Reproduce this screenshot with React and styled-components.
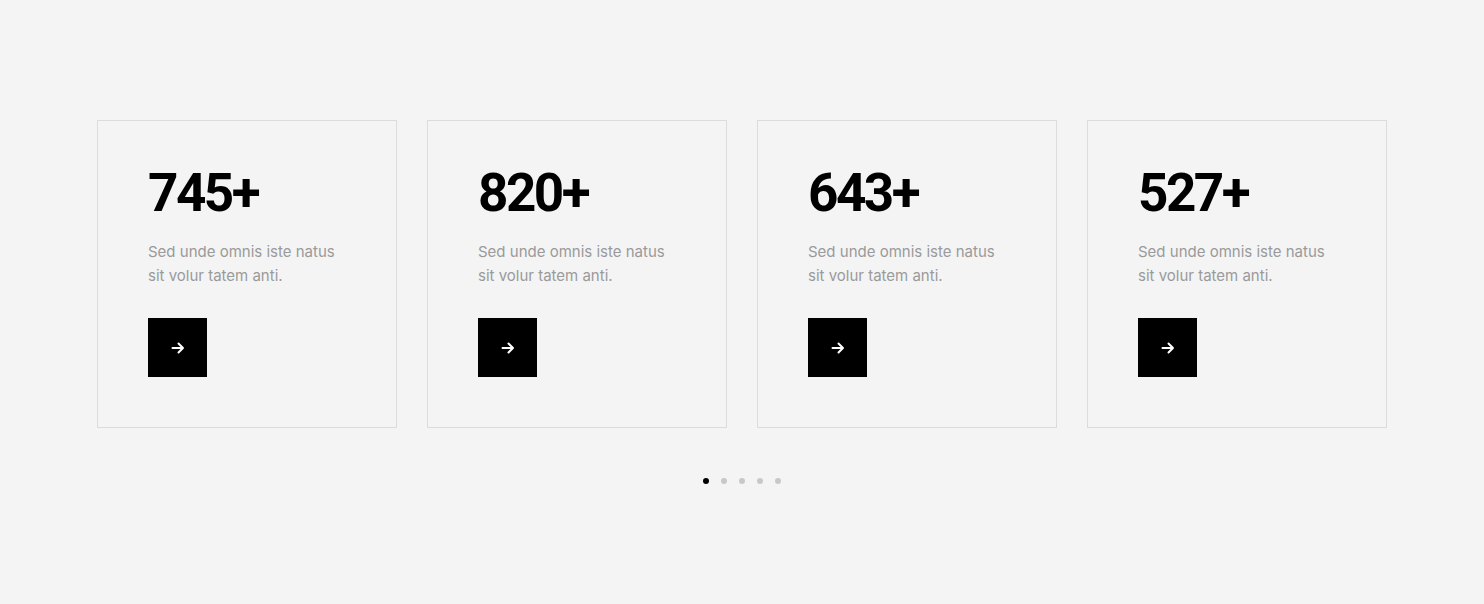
import React from "react";
import styled, { createGlobalStyle } from "styled-components";

const GlobalStyle = createGlobalStyle`
  html, body {
    margin: 0;
    background: #f4f4f4;
    font-family: Inter, "Liberation Sans", sans-serif;
  }
`;

const Section = styled.section`
  padding: 120px 0 0;
  height: 604px;
  box-sizing: border-box;
  display: flex;
  flex-direction: column;
  align-items: center;
`;

const CardRow = styled.div`
  display: grid;
  grid-template-columns: repeat(4, 300px);
  gap: 30px;
`;

const Card = styled.div`
  box-sizing: border-box;
  border: 1px solid #dcdcdc;
  padding: 43px 50px 50px;
  display: flex;
  flex-direction: column;
`;

const Number = styled.div`
  font-family: Roboto, "Liberation Sans", sans-serif;
  font-weight: 700;
  font-size: 53px;
  line-height: 58px;
  letter-spacing: -2.5px;
  color: #000;
`;

const Text = styled.p`
  margin: 18px 0 0;
  font-size: 15px;
  line-height: 24px;
  color: #9a9a9a;
  width: 200px;
`;

const ArrowButton = styled.button`
  flex-shrink: 0;
  margin-top: 30px;
  width: 59px;
  height: 59px;
  border: none;
  background: #000;
  color: #fff;
  display: flex;
  align-items: center;
  justify-content: center;
  padding: 0;
  cursor: pointer;
`;

const Dots = styled.div`
  margin-top: 50px;
  display: flex;
  gap: 12px;
`;

const Dot = styled.span`
  width: 6px;
  height: 6px;
  border-radius: 50%;
  background: ${(p) => (p.active ? "#000" : "#c8c8c8")};
`;

const stats = ["745+", "820+", "643+", "527+"];

function Arrow() {
  return (
    <svg width="14" height="14" viewBox="0 0 14 14" fill="none">
      <path
        d="M1.5 7h10.5M7.5 2.5 12 7l-4.5 4.5"
        stroke="#fff"
        strokeWidth="2"
        strokeLinecap="round"
        strokeLinejoin="round"
      />
    </svg>
  );
}

export default function App() {
  return (
    <>
      <GlobalStyle />
      <Section>
        <CardRow>
          {stats.map((s) => (
            <Card key={s}>
              <Number>{s}</Number>
              <Text>Sed unde omnis iste natus sit volur tatem anti.</Text>
              <ArrowButton aria-label="More">
                <Arrow />
              </ArrowButton>
            </Card>
          ))}
        </CardRow>
        <Dots>
          {[0, 1, 2, 3, 4].map((i) => (
            <Dot key={i} active={i === 0} />
          ))}
        </Dots>
      </Section>
    </>
  );
}
